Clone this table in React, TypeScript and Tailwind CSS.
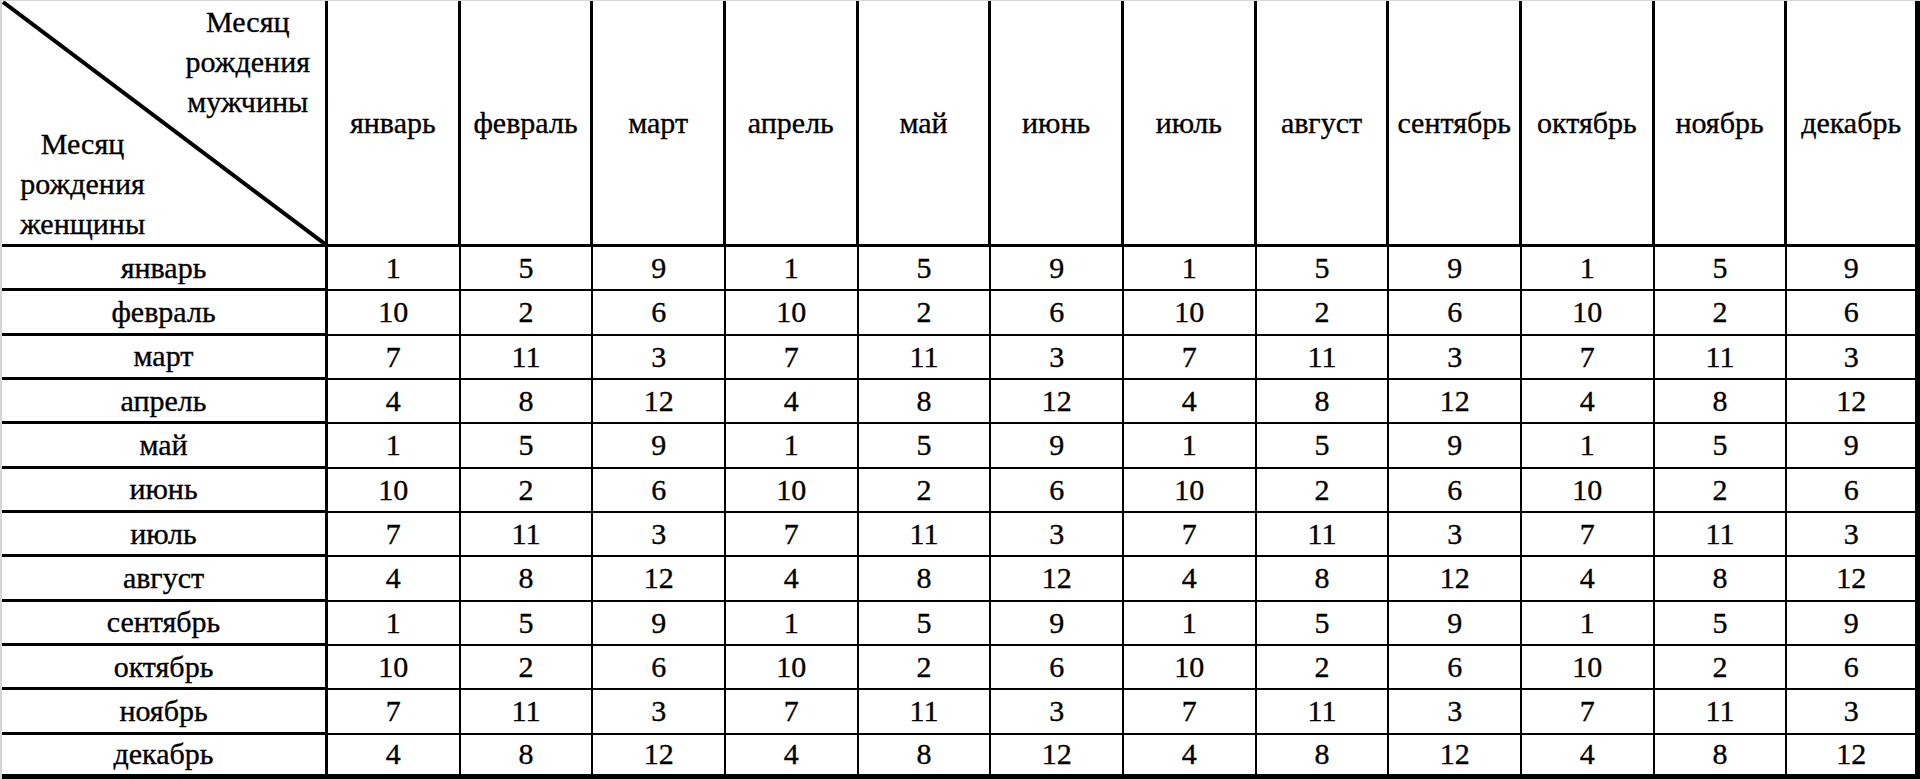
import React from "react";

const months = [
  "январь",
  "февраль",
  "март",
  "апрель",
  "май",
  "июнь",
  "июль",
  "август",
  "сентябрь",
  "октябрь",
  "ноябрь",
  "декабрь",
];

const patterns = [
  [1, 5, 9],
  [10, 2, 6],
  [7, 11, 3],
  [4, 8, 12],
];

export default function App() {
  return (
    <div
      className="w-[1920px] h-[779px] bg-white text-black border-l-2 border-t border-[#d6d6d6] overflow-hidden"
      style={{ fontFamily: '"Liberation Serif", "Times New Roman", serif' }}
    >
      <div className="grid h-full w-full grid-cols-[326px_repeat(12,minmax(0,1fr))] grid-rows-[246px_repeat(12,minmax(0,1fr))] text-[30px] leading-none [-webkit-text-stroke:0.35px_black]">
        {/* Corner cell */}
        <div className="relative flex flex-col justify-between border-r-[3px] border-b-[3px] border-black">
          <svg
            className="absolute inset-0 h-full w-full"
            preserveAspectRatio="none"
            viewBox="0 0 323 243"
          >
            <line x1="1" y1="1" x2="323" y2="243" stroke="black" strokeWidth="4" />
          </svg>
          <div className="self-end mr-[15px] pt-[1px] text-center leading-[40px]">
            Месяц
            <br />
            рождения
            <br />
            мужчины
          </div>
          <div className="self-start ml-[18px] text-center leading-[40px]">
            Месяц
            <br />
            рождения
            <br />
            женщины
          </div>
        </div>
        {/* Header months */}
        {months.map((m, j) => (
          <div
            key={m}
            className={`flex items-center justify-center border-b-[3px] border-black ${
              j === 11 ? "border-r-[5px]" : "border-r-[3px]"
            }`}
          >
            {m}
          </div>
        ))}
        {/* Body */}
        {months.map((m, i) => {
          const last = i === 11;
          const p = patterns[i % 4];
          return (
            <React.Fragment key={m}>
              <div
                className={`flex items-center justify-center border-r-[3px] border-black ${
                  last ? "border-b-[5px]" : "border-b-[3px]"
                }`}
              >
                {m}
              </div>
              {months.map((_, j) => (
                <div
                  key={j}
                  className={`flex items-center justify-center border-black ${
                    last ? "border-b-[5px]" : "border-b-2"
                  } ${j === 11 ? "border-r-[5px]" : "border-r-2"}`}
                >
                  {p[j % 3]}
                </div>
              ))}
            </React.Fragment>
          );
        })}
      </div>
    </div>
  );
}
